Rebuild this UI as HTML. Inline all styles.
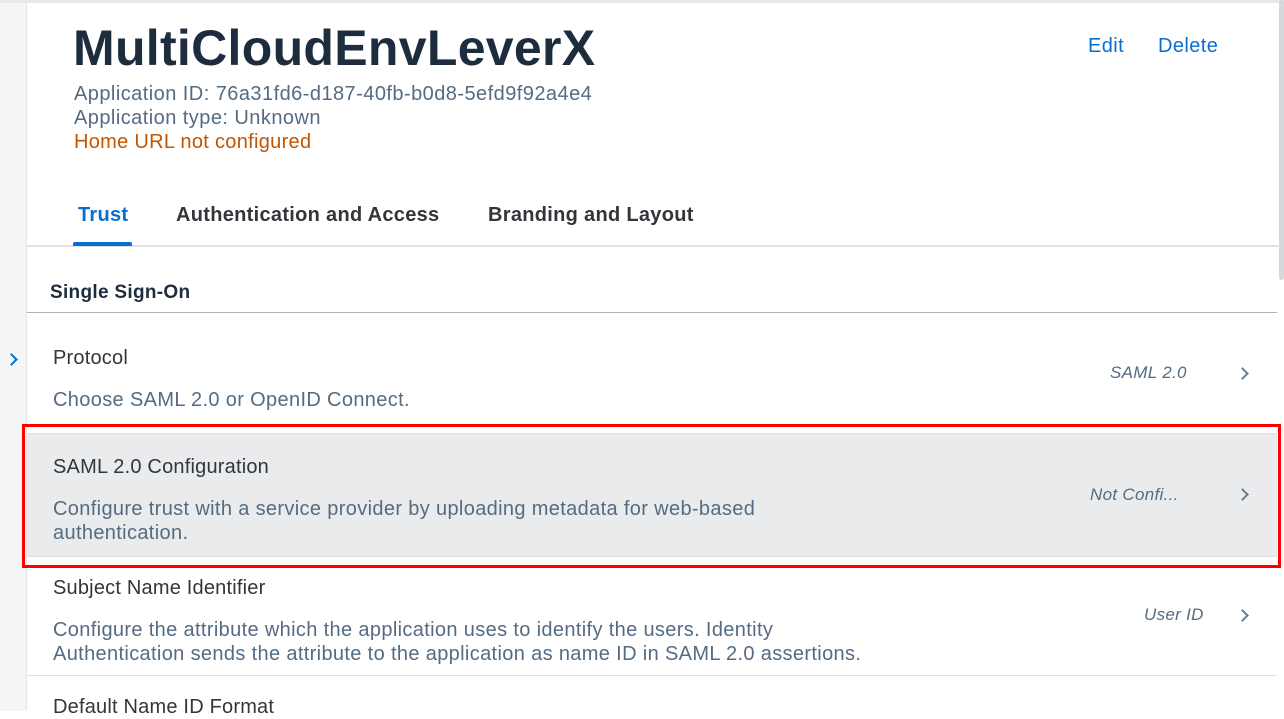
<!DOCTYPE html>
<html><head><style>
body{margin:0;width:1284px;height:711px;overflow:hidden;background:#fff;font-family:"Liberation Sans",Arial,sans-serif;position:relative}
.a{position:absolute;white-space:nowrap}
.s{color:#556b82;font-size:20px;letter-spacing:0.45px}
.d{color:#556b82;font-size:20px;letter-spacing:0.35px}
.t{color:#32363a;font-size:20px;letter-spacing:0.2px}
.v{color:#556b82;font-size:17px;font-style:italic;letter-spacing:0.3px}
.ch{position:absolute;width:7px;height:7px;border-right:2px solid #6a7d90;border-top:2px solid #6a7d90;transform:rotate(45deg)}
</style></head><body>
<div class="a" style="left:0;top:0;width:26px;height:711px;background:#f4f5f6;border-right:1px solid #e5e5e5"></div>
<div class="a" style="left:0;top:0;width:1284px;height:3px;background:#e8e8e8"></div>
<div class="ch" style="left:7px;top:355px;border-color:#0a6ed1"></div>
<div class="a" style="left:1279px;top:0;width:5px;height:280px;background:#d5d8db;border-radius:3px"></div>
<div class="a" style="left:73px;top:19px;font-size:50px;font-weight:bold;color:#1d2d3e;letter-spacing:0.3px">MultiCloudEnvLeverX</div>
<div class="a" style="left:1088px;top:35px;font-size:20px;color:#0a6ed1;letter-spacing:0.4px">Edit</div>
<div class="a" style="left:1158px;top:35px;font-size:20px;color:#0a6ed1;letter-spacing:0.4px">Delete</div>
<div class="a s" style="left:74px;top:83px">Application ID: 76a31fd6-d187-40fb-b0d8-5efd9f92a4e4</div>
<div class="a s" style="left:74px;top:107px">Application type: Unknown</div>
<div class="a" style="left:74px;top:131px;font-size:20px;color:#c35500;letter-spacing:0.3px">Home URL not configured</div>
<div class="a" style="left:78px;top:204px;font-size:20px;font-weight:bold;color:#0a6ed1;letter-spacing:0.3px">Trust</div>
<div class="a" style="left:176px;top:204px;font-size:20px;font-weight:bold;color:#32363a;letter-spacing:0.3px">Authentication and Access</div>
<div class="a" style="left:488px;top:204px;font-size:20px;font-weight:bold;color:#32363a;letter-spacing:0.3px">Branding and Layout</div>
<div class="a" style="left:27px;top:245px;width:1253px;height:2px;background:#e0e2e4"></div>
<div class="a" style="left:73px;top:242px;width:59px;height:4px;background:#0a6ed1;border-radius:2px 2px 0 0"></div>
<div class="a" style="left:50px;top:282px;font-size:19px;font-weight:bold;color:#1d2d3e;letter-spacing:0.3px">Single Sign-On</div>
<div class="a" style="left:27px;top:312px;width:1250px;height:1px;background:#a9b4be"></div>
<div class="a t" style="left:53px;top:347px">Protocol</div>
<div class="a d" style="left:53px;top:389px">Choose SAML 2.0 or OpenID Connect.</div>
<div class="a v" style="left:1110px;top:363px">SAML 2.0</div>
<div class="ch" style="left:1238px;top:369px"></div>
<div class="a" style="left:27px;top:433px;width:1250px;height:122px;background:#eaebec;border-top:1px solid #e0e0e0;border-bottom:1px solid #e0e0e0"></div>
<div class="a" style="left:22px;top:424px;width:1253px;height:138px;border:3px solid #f00"></div>
<div class="a t" style="left:53px;top:456px">SAML 2.0 Configuration</div>
<div class="a d" style="left:53px;top:497px;line-height:24px">Configure trust with a service provider by uploading metadata for web-based<br>authentication.</div>
<div class="a v" style="left:1090px;top:485px">Not Confi...</div>
<div class="ch" style="left:1238px;top:490px"></div>
<div class="a t" style="left:53px;top:577px">Subject Name Identifier</div>
<div class="a d" style="left:53px;top:618px;line-height:24px">Configure the attribute which the application uses to identify the users. Identity<br>Authentication sends the attribute to the application as name ID in SAML 2.0 assertions.</div>
<div class="a v" style="left:1144px;top:605px">User ID</div>
<div class="ch" style="left:1238px;top:611px"></div>
<div class="a" style="left:27px;top:675px;width:1250px;height:1px;background:#e0e2e4"></div>
<div class="a t" style="left:53px;top:696px">Default Name ID Format</div>
</body></html>
